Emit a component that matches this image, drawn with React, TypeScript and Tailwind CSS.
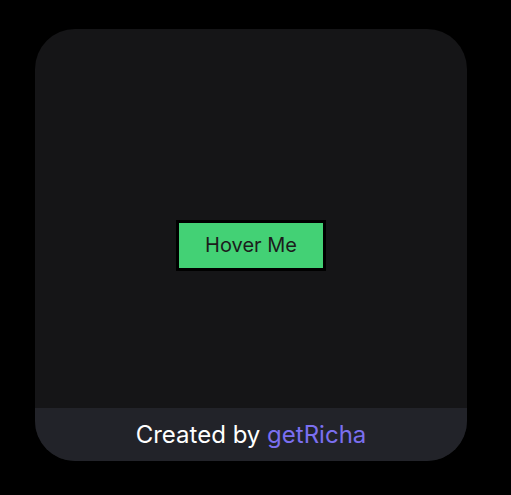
export default function App() {
  return (
    <div className="min-h-[495px] bg-black pl-[35px] pt-[29px] font-['Inter',sans-serif]">
      <div className="relative flex h-[432px] w-[432px] items-center justify-center overflow-hidden rounded-[40px] bg-[#151517]">
        <button
          type="button"
          className="h-[51px] w-[150px] border-[3px] border-black bg-[#43d175] text-[20px] text-[#1c1c1c]"
        >
          Hover Me
        </button>
        <div className="absolute inset-x-0 bottom-0 flex h-[53px] items-center justify-center bg-[#222329] text-[24px] text-white">
          <span>
            Created by <span className="text-[#7b6ff0]">getRicha</span>
          </span>
        </div>
      </div>
    </div>
  );
}
